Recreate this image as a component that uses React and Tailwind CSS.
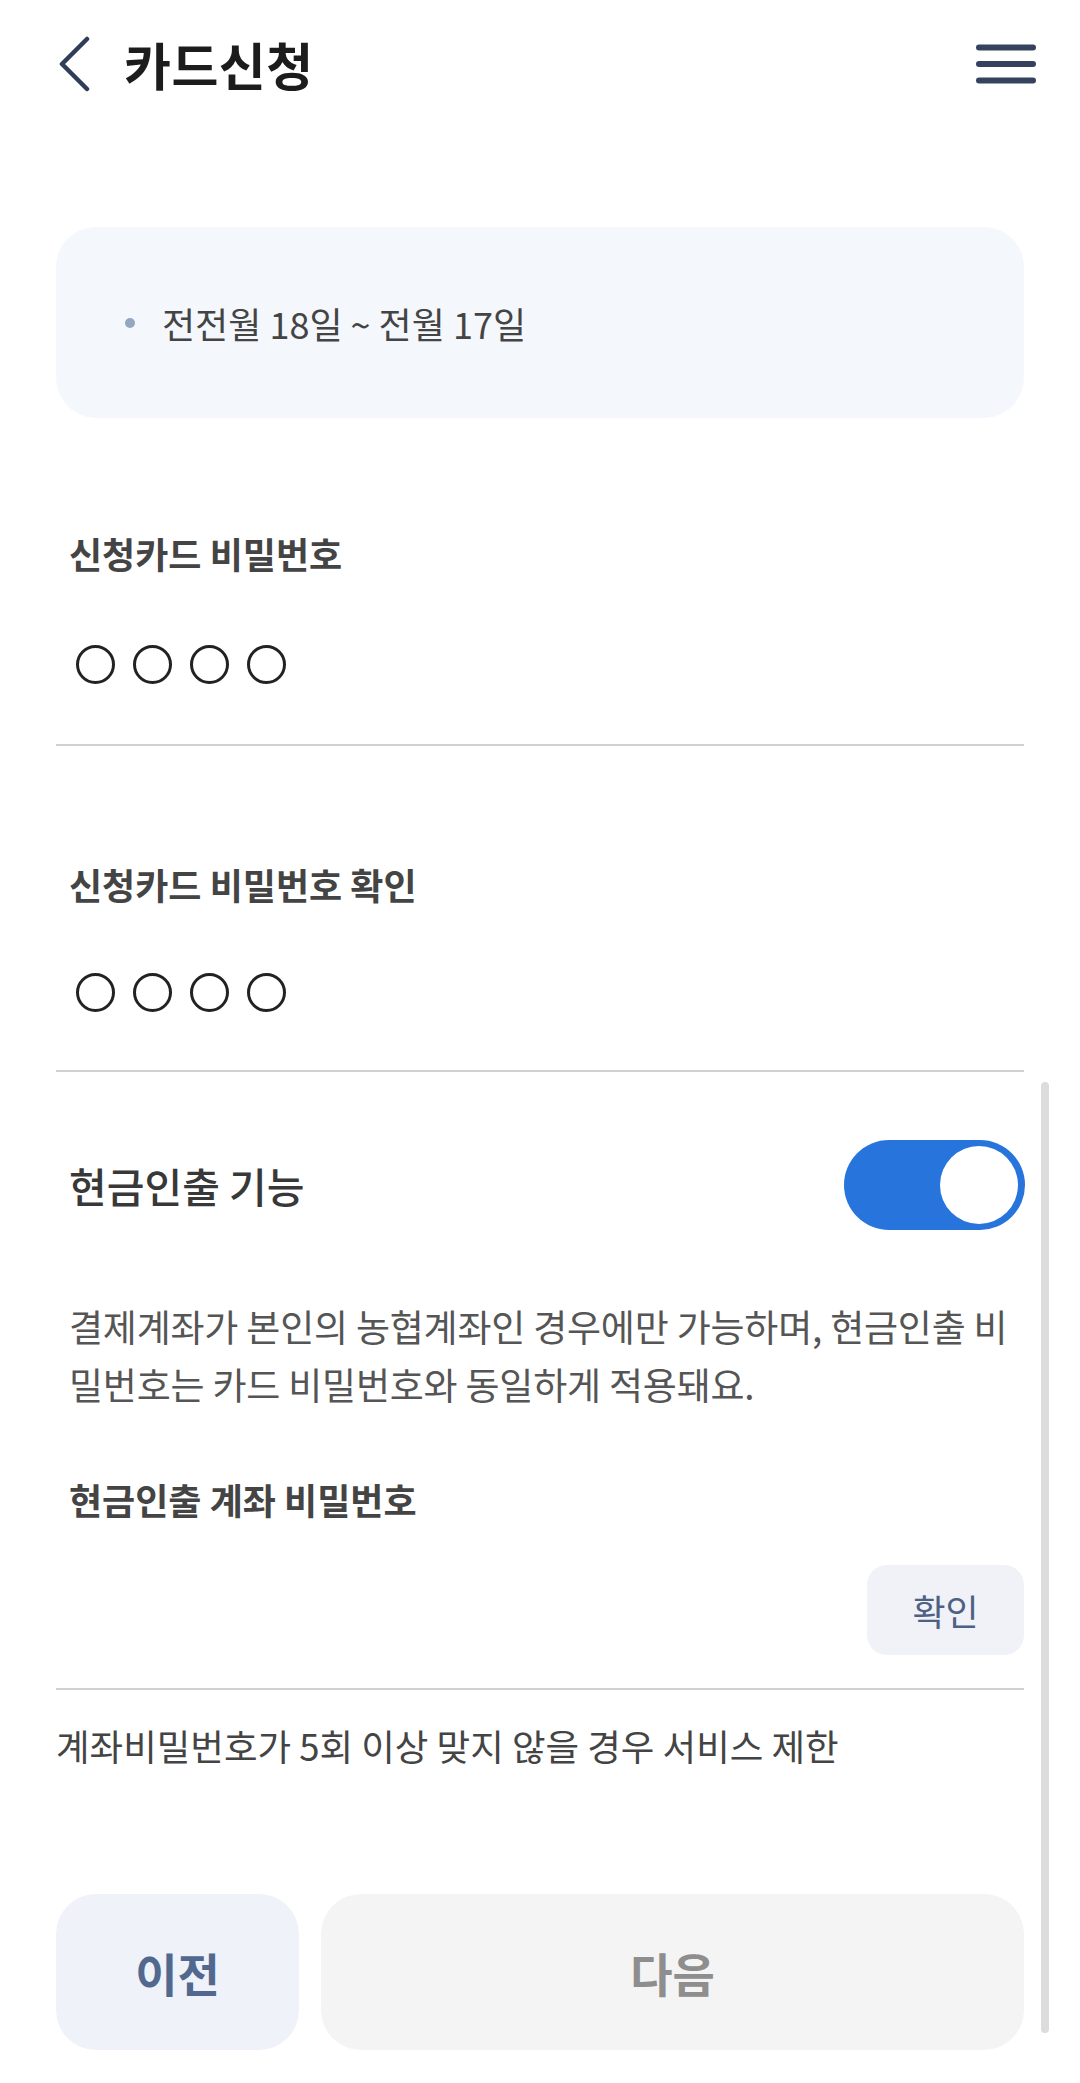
import React, { useState } from "react";

const PinDots = () => (
  <div className="flex items-center gap-[18px] pl-[20px]">
    {[0, 1, 2, 3].map((i) => (
      <span
        key={i}
        className="block w-[39px] h-[39px] rounded-full border-[3px] border-[#222222]"
      />
    ))}
  </div>
);

const App = () => {
  const [cashOn, setCashOn] = useState(true);

  return (
    <div className="relative w-[1080px] min-h-[2083px] bg-white font-['Noto_Sans_CJK_KR',sans-serif] overflow-hidden">
      {/* header */}
      <header className="flex items-center justify-between h-[128px] pl-[57px] pr-[44px]">
        <div className="flex items-center">
          <svg width="36" height="56" viewBox="0 0 36 56" fill="none">
            <path
              d="M30 3 L5 28 L30 53"
              stroke="#2f3d5a"
              strokeWidth="4.5"
              strokeLinecap="round"
              strokeLinejoin="round"
            />
          </svg>
          <h1 className="ml-[31px] text-[51px] leading-none font-bold text-[#1c1c1c] tracking-[0.5px]">
            카드신청
          </h1>
        </div>
        <svg width="60" height="44" viewBox="0 0 60 44" fill="none">
          <path
            d="M3 5.5 H57 M3 22 H57 M3 38.5 H57"
            stroke="#34425e"
            strokeWidth="6"
            strokeLinecap="round"
          />
        </svg>
      </header>

      <main className="px-[56px]">
        {/* billing period */}
        <div className="mt-[99px] h-[191px] rounded-[40px] bg-[#f4f7fc] flex items-center pl-[69px]">
          <span className="block w-[10px] h-[10px] rounded-full bg-[#94a7c0]" />
          <span className="ml-[27px] text-[36px] leading-none text-[#444444]">
            전전월 18일 ~ 전월 17일
          </span>
        </div>

        {/* card password */}
        <div className="border-b-2 border-[#d0d0d0] pb-[60px]">
          <p className="mt-[112px] pl-[13px] text-[36px] leading-[46px] font-bold text-[#444444]">
            신청카드 비밀번호
          </p>
          <div className="mt-[69px]">
            <PinDots />
          </div>
        </div>

        <div className="border-b-2 border-[#d0d0d0] pb-[58px]">
          <p className="mt-[115px] pl-[13px] text-[36px] leading-[46px] font-bold text-[#444444]">
            신청카드 비밀번호 확인
          </p>
          <div className="mt-[66px]">
            <PinDots />
          </div>
        </div>

        {/* cash withdrawal */}
        <div className="mt-[68px] flex items-center justify-between pl-[13px]">
          <span className="text-[41px] leading-none font-medium text-[#383838]">
            현금인출 기능
          </span>
          <button
            onClick={() => setCashOn(!cashOn)}
            className={`w-[181px] h-[90px] rounded-full flex items-center px-[7px] mr-[-1px] ${
              cashOn ? "bg-[#2674dc] justify-end" : "bg-[#cfd5df] justify-start"
            }`}
          >
            <span className="block w-[78px] h-[78px] rounded-full bg-white" />
          </button>
        </div>

        <p className="mt-[67px] pl-[13px] text-[37px] leading-[58px] text-[#555555] whitespace-nowrap tracking-[-0.2px]">
          결제계좌가 본인의 농협계좌인 경우에만 가능하며, 현금인출 비
          <br />
          밀번호는 카드 비밀번호와 동일하게 적용돼요.
        </p>

        <div className="border-b-2 border-[#d0d0d0] pb-[33px]">
          <p className="mt-[63px] pl-[13px] text-[36px] leading-[46px] font-bold text-[#444444]">
            현금인출 계좌 비밀번호
          </p>
          <div className="mt-[43px] flex justify-end">
            <button className="w-[157px] h-[90px] rounded-[20px] bg-[#f0f2f8] text-[36px] text-[#4e6184]">
              확인
            </button>
          </div>
        </div>

        <p className="mt-[33px] text-[36.5px] leading-[46px] text-[#444444]">
          계좌비밀번호가 5회 이상 맞지 않을 경우 서비스 제한
        </p>

        {/* bottom actions */}
        <div className="mt-[125px] flex gap-[22px]">
          <button className="w-[243px] h-[156px] rounded-[40px] bg-[#eff2f8] text-[46px] font-bold text-[#52698f]">
            이전
          </button>
          <button className="flex-1 h-[156px] rounded-[40px] bg-[#f4f4f5] text-[46px] font-bold text-[#8e8e8e]">
            다음
          </button>
        </div>
      </main>

      {/* overlay scroll indicator */}
      <div className="absolute left-[1041px] top-[1082px] w-[8px] h-[951px] rounded-full bg-[#dcdcdc]" />
    </div>
  );
};

export default App;
